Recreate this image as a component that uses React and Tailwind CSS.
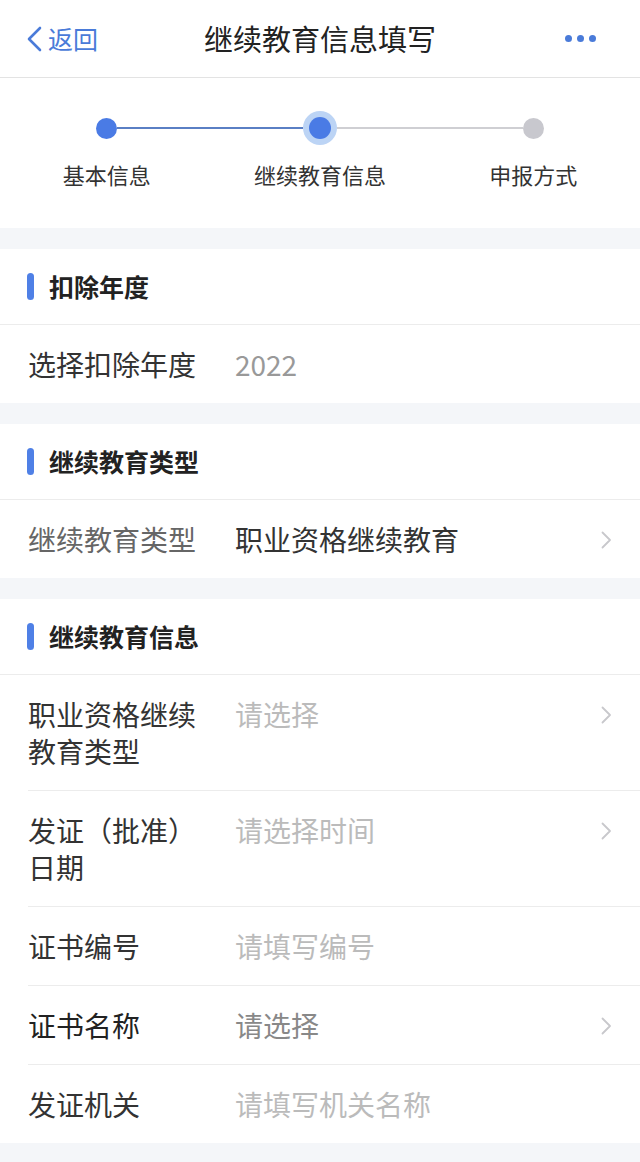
import React from "react";

const Chevron = () => (
  <svg width="12" height="20" viewBox="0 0 12 20" fill="none">
    <path d="M2.5 2.5l7.5 7.5-7.5 7.5" stroke="#c8c8cc" strokeWidth="1.8" strokeLinecap="round" strokeLinejoin="round" />
  </svg>
);

const SectionTitle = ({ title }) => (
  <div className="h-[76px] flex items-center border-b border-[#ececec]">
    <div className="ml-[27px] w-[7px] h-[27px] rounded-full bg-[#4f80e6]" />
    <div className="ml-[15px] text-[25px] font-bold text-[#222]">{title}</div>
  </div>
);

const Row = ({ label, value, labelColor = "text-[#333]", valueColor = "text-[#bbb]", arrow, border }) => (
  <div className={`ml-[28px] flex items-start pt-[21px] pb-[20px] pr-[28px] ${border ? "border-b border-[#ececec]" : ""}`}>
    <div className={`w-[180px] mr-[27px] leading-[37px] ${labelColor}`}>{label}</div>
    <div className={`flex-1 leading-[37px] ${valueColor}`}>{value}</div>
    {arrow && (
      <div className="h-[37px] flex items-center">
        <Chevron />
      </div>
    )}
  </div>
);

const steps = [
  { name: "基本信息", left: null, right: "bg-[#5a7fc4]", state: "done" },
  { name: "继续教育信息", left: "bg-[#5a7fc4]", right: "bg-[#cfcfd3]", state: "active" },
  { name: "申报方式", left: "bg-[#cfcfd3]", right: null, state: "todo" },
];

export default function App() {
  return (
    <div className="min-h-screen bg-[#f4f6f9] text-[28px] font-['Noto_Sans_CJK_SC','Noto_Sans',sans-serif]">
      {/* Header */}
      <div className="h-[78px] bg-white border-b border-[#e3e3e3] grid grid-cols-[1fr_auto_1fr] items-center">
        <div className="flex items-center pl-[25px] text-[#4a7bd9]">
          <svg width="18" height="28" viewBox="0 0 18 28" fill="none">
            <path d="M15 3L4 14l11 11" stroke="#4a7bd9" strokeWidth="2.6" strokeLinecap="round" strokeLinejoin="round" />
          </svg>
          <span className="ml-[5px] text-[25px]">返回</span>
        </div>
        <div className="text-[29px] text-[#222]">继续教育信息填写</div>
        <div className="flex justify-end items-center gap-[5px] pr-[44px]">
          <span className="w-[7px] h-[7px] rounded-full bg-[#4a7bd9]" />
          <span className="w-[7px] h-[7px] rounded-full bg-[#4a7bd9]" />
          <span className="w-[7px] h-[7px] rounded-full bg-[#4a7bd9]" />
        </div>
      </div>

      {/* Stepper */}
      <div className="h-[150px] bg-white grid grid-cols-3 pt-[33px]">
        {steps.map((s) => (
          <div key={s.name} className="flex flex-col items-center">
            <div className="w-full h-[34px] flex items-center">
              <div className={`flex-1 h-[2px] ${s.left || ""}`} />
              {s.state === "active" ? (
                <div className="w-[34px] h-[34px] rounded-full bg-[#bcd4f5] flex items-center justify-center">
                  <div className="w-[22px] h-[22px] rounded-full bg-[#4a7be5]" />
                </div>
              ) : (
                <div className={`w-[21px] h-[21px] rounded-full ${s.state === "done" ? "bg-[#4a7be5]" : "bg-[#c8c8ce]"}`} />
              )}
              <div className={`flex-1 h-[2px] ${s.right || ""}`} />
            </div>
            <div className="mt-[13px] text-[22px] text-[#333] leading-[32px]">{s.name}</div>
          </div>
        ))}
      </div>

      {/* 扣除年度 */}
      <div className="mt-[21px] bg-white">
        <SectionTitle title="扣除年度" />
        <Row label="选择扣除年度" value="2022" valueColor="text-[#999]" />
      </div>

      {/* 继续教育类型 */}
      <div className="mt-[21px] bg-white">
        <SectionTitle title="继续教育类型" />
        <Row label="继续教育类型" labelColor="text-[#666]" value="职业资格继续教育" valueColor="text-[#333]" arrow />
      </div>

      {/* 继续教育信息 */}
      <div className="mt-[21px] bg-white">
        <SectionTitle title="继续教育信息" />
        <Row label="职业资格继续教育类型" value="请选择" arrow border />
        <Row label="发证（批准）日期" value="请选择时间" arrow border />
        <Row label="证书编号" value="请填写编号" border />
        <Row label="证书名称" labelColor="text-[#222]" value="请选择" valueColor="text-[#888]" arrow border />
        <Row label="发证机关" value="请填写机关名称" />
      </div>
    </div>
  );
}
